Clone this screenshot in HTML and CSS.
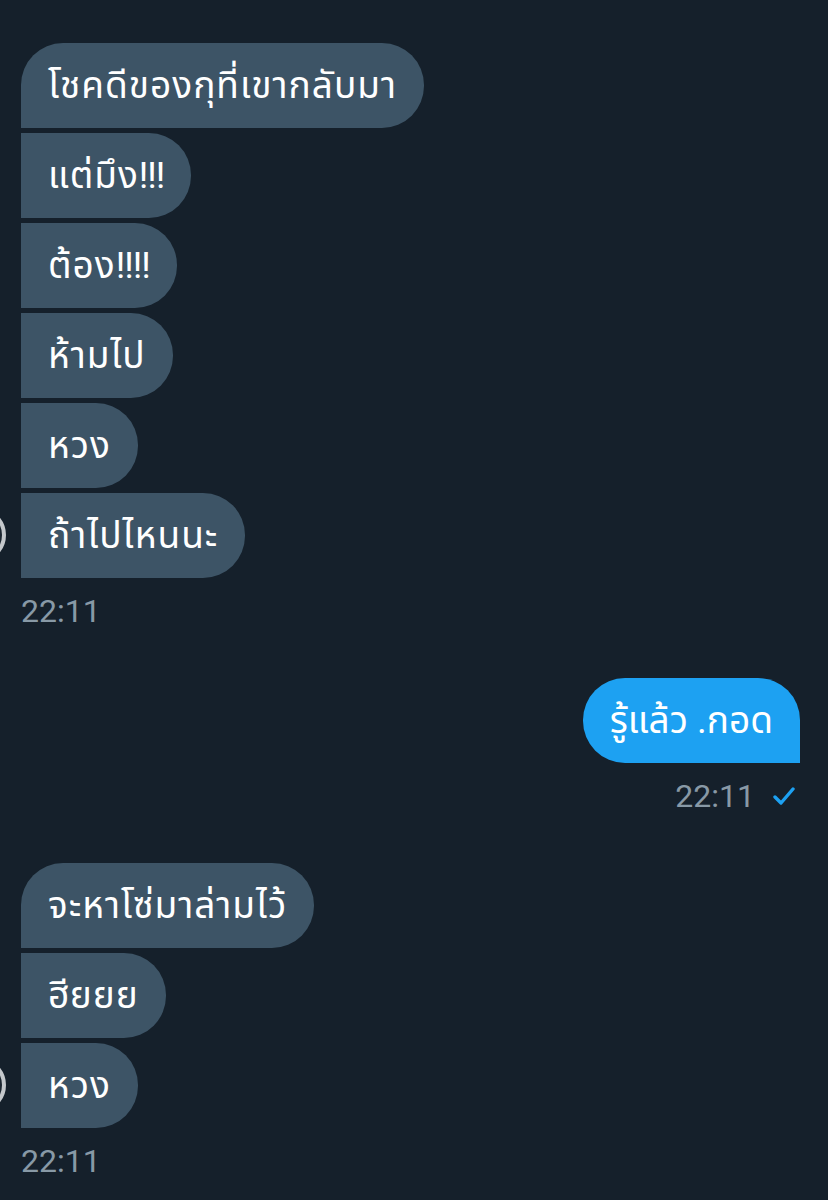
FILE: index.html
```html
<!DOCTYPE html>
<html lang="th">
<head>
<meta charset="utf-8">
<link rel="stylesheet" href="styles.css">
</head>
<body>
<div class="chat">
  <div class="group in">
    <div class="bubble first">โชคดีของกุที่เขากลับมา</div>
    <div class="bubble">แต่มึง<span class="bang">!!!</span></div>
    <div class="bubble">ต้อง<span class="bang">!!!!</span></div>
    <div class="bubble">ห้ามไป</div>
    <div class="bubble">หวง</div>
    <div class="bubble last">ถ้าไปไหนนะ<span class="avatar"></span></div>
    <div class="time">22:11</div>
  </div>
  <div class="group out">
    <div class="bubble single">รู้แล้ว .กอด</div>
    <div class="time">22:11
      <svg class="check" width="22" height="20" viewBox="0 0 22 20"><path d="M2 11 L8 17 L20 3" fill="none" stroke="#1da1f2" stroke-width="3.4" stroke-linecap="round" stroke-linejoin="round"/></svg>
    </div>
  </div>
  <div class="group in">
    <div class="bubble first">จะหาโซ่มาล่ามไว้</div>
    <div class="bubble">ฮียยย</div>
    <div class="bubble last">หวง<span class="avatar"></span></div>
    <div class="time">22:11</div>
  </div>
</div>
</body>
</html>
```
FILE: styles.css
```css
html, body {
  margin: 0;
  padding: 0;
  background: #15202b;
}
body {
  width: 828px;
  height: 1200px;
  overflow: hidden;
  font-family: "Roboto", "Noto Sans", "Noto Sans Thai", sans-serif;
}
.chat {
  display: flex;
  flex-direction: column;
  gap: 49px;
  padding: 43px 28px 0 21px;
}
.group {
  display: flex;
  flex-direction: column;
  gap: 5px;
}
.group.in { align-items: flex-start; }
.group.out { align-items: flex-end; }
.bubble {
  position: relative;
  background: #3d5466;
  color: #ffffff;
  font-size: 37px;
  line-height: 45px;
  letter-spacing: 1px;
  padding: 20px 27px 20px 27px;
  border-radius: 0 42px 42px 0;
  white-space: nowrap;
}
.bang { letter-spacing: -1px; }
.bubble.first { border-radius: 42px 42px 42px 0; }
.out .bubble.single {
  background: #1da1f2;
  letter-spacing: 0;
  border-radius: 42px 42px 0 42px;
}
.time {
  margin-top: 10px;
  color: #8899a6;
  font-size: 32px;
  line-height: 36px;
  display: flex;
  align-items: center;
  gap: 18px;
}
.out .time { padding-right: 5px; }
.check { display: block; }
.avatar {
  position: absolute;
  left: -71px;
  top: 14px;
  width: 48px;
  height: 48px;
  border-radius: 50%;
  border: 4px solid #c4c8cc;
  background: #1c2630;
}
```
